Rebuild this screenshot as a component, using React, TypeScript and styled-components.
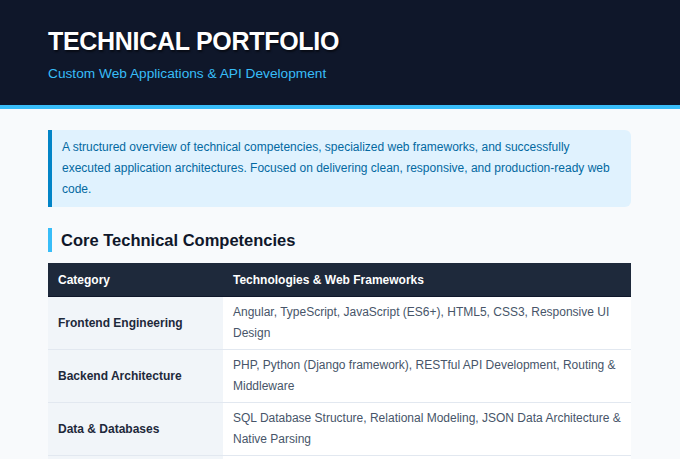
import React from "react";
import styled, { createGlobalStyle } from "styled-components";

const Global = createGlobalStyle`
  body { margin: 0; background: #f8fafc; font-family: "Liberation Sans", Arial, sans-serif; }
`;

const Header = styled.header`
  background: #0f172a;
  border-bottom: 4px solid #38bdf8;
  padding: 27px 48px 0;
  height: 78px;
`;
const Title = styled.h1`
  margin: 0;
  color: #fff;
  font-size: 25px;
  font-weight: 700;
  letter-spacing: -0.3px;
  text-shadow: 1px 2px 2px rgba(0,0,0,0.5);
  line-height: 28px;
`;
const Subtitle = styled.p`
  margin: 10px 0 0;
  color: #38bdf8;
  font-size: 13.7px;
  line-height: 18px;
`;
const Main = styled.main`
  padding: 21px 49px 0 48px;
`;
const Intro = styled.div`
  background: #e0f2fe;
  border-left: 4px solid #0284c7;
  border-radius: 0 6px 6px 0;
  padding: 7px 14px 7px 10px;
  color: #0369a1;
  font-size: 12px;
  line-height: 21px;
`;
const SectionTitle = styled.h2`
  margin: 21px 0 11px;
  border-left: 4px solid #38bdf8;
  padding-left: 9px;
  font-size: 16.5px;
  font-weight: 700;
  color: #0f172a;
  line-height: 24px;
`;
const Table = styled.table`
  width: 100%;
  border-collapse: collapse;
  background: #fff;
  font-size: 12px;
`;
const Th = styled.th`
  background: #1e293b;
  color: #fff;
  text-align: left;
  font-weight: 700;
  padding: 0 10px;
  height: 33px;
  border-bottom: 1px solid #0f172a;
`;
const Td = styled.td<{ $cat?: boolean }>`
  padding: 5px 10px;
  height: 41px;
  vertical-align: middle;
  border-bottom: 1px solid #e2e8f0;
  line-height: 21px;
  ${(p) => p.$cat ? "background:#f1f5f9;font-weight:700;color:#1e293b;width:155px;" : "color:#475569;"}
`;

const rows = [
  ["Frontend Engineering", "Angular, TypeScript, JavaScript (ES6+), HTML5, CSS3, Responsive UI Design"],
  ["Backend Architecture", "PHP, Python (Django framework), RESTful API Development, Routing & Middleware"],
  ["Data & Databases", "SQL Database Structure, Relational Modeling, JSON Data Architecture & Native Parsing"],
  ["Development Standards", "Clean Code Principles, OOP (Object-Oriented Programming), Git Version Control, Agile Workflow"],
];

export default function App() {
  return (
    <>
      <Global />
      <Header>
        <Title>TECHNICAL PORTFOLIO</Title>
        <Subtitle>Custom Web Applications &amp; API Development</Subtitle>
      </Header>
      <Main>
        <Intro>
          A structured overview of technical competencies, specialized web frameworks, and successfully executed application architectures. Focused on delivering clean, responsive, and production-ready web code.
        </Intro>
        <SectionTitle>Core Technical Competencies</SectionTitle>
        <Table>
          <thead>
            <tr><Th>Category</Th><Th>Technologies &amp; Web Frameworks</Th></tr>
          </thead>
          <tbody>
            {rows.map(([c, t]) => (
              <tr key={c}><Td $cat>{c}</Td><Td>{t}</Td></tr>
            ))}
          </tbody>
        </Table>
      </Main>
    </>
  );
}
